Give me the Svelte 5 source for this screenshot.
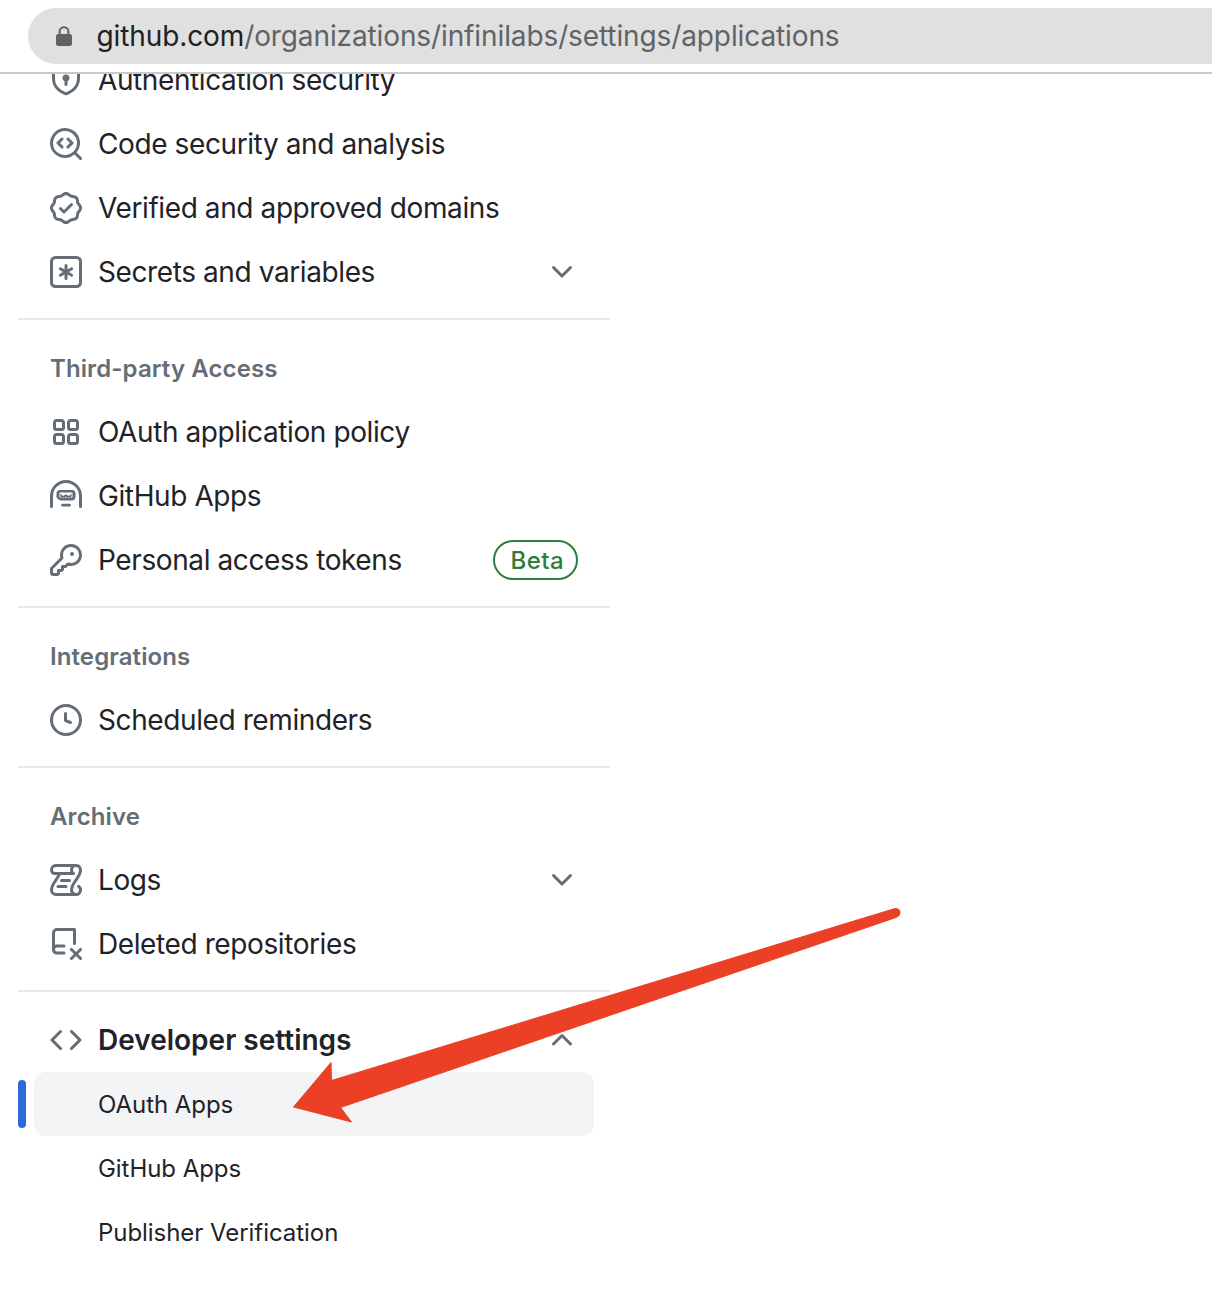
<script>
  const icons = {
    shield: 'M7.467.133a1.748 1.748 0 0 1 1.066 0l5.25 1.68A1.75 1.75 0 0 1 15 3.48V7c0 1.566-.32 3.182-1.303 4.682-.983 1.498-2.585 2.813-5.032 3.855a1.697 1.697 0 0 1-1.33 0c-2.447-1.042-4.049-2.357-5.032-3.855C1.32 10.182 1 8.566 1 7V3.48a1.75 1.75 0 0 1 1.217-1.667Zm.61 1.429a.25.25 0 0 0-.153 0l-5.25 1.68a.25.25 0 0 0-.174.238V7c0 1.358.275 2.666 1.057 3.86.784 1.194 2.121 2.34 4.366 3.297a.196.196 0 0 0 .154 0c2.245-.956 3.582-2.104 4.366-3.298C13.225 9.666 13.5 8.36 13.5 7V3.48a.251.251 0 0 0-.174-.237l-5.25-1.68ZM8.75 8.582v1.668a.75.75 0 0 1-1.5 0V8.582a1.75 1.75 0 1 1 1.5 0Z',
    codescan: 'M8.47 4.97a.75.75 0 0 0 0 1.06L9.94 7.5 8.47 8.97a.75.75 0 1 0 1.06 1.06l2-2a.75.75 0 0 0 0-1.06l-2-2a.75.75 0 0 0-1.06 0ZM6.53 6.03a.75.75 0 0 0-1.06-1.06l-2 2a.75.75 0 0 0 0 1.06l2 2a.75.75 0 1 0 1.06-1.06L5.06 7.5l1.47-1.47Z M12.246 13.307a7.501 7.501 0 1 1 1.06-1.06l2.474 2.473a.749.749 0 0 1-.326 1.275.749.749 0 0 1-.734-.215ZM1.5 7.5a6.002 6.002 0 0 0 3.608 5.504 6.002 6.002 0 0 0 6.486-1.117.748.748 0 0 1 .292-.293A6 6 0 1 0 1.5 7.5Z',
    verified: 'm9.585.52.929.68c.153.112.331.186.518.215l1.138.175a2.678 2.678 0 0 1 2.24 2.24l.174 1.139c.029.187.103.365.215.518l.68.928a2.677 2.677 0 0 1 0 3.17l-.68.928a1.174 1.174 0 0 0-.215.518l-.175 1.138a2.678 2.678 0 0 1-2.241 2.241l-1.138.175a1.17 1.17 0 0 0-.518.215l-.928.68a2.677 2.677 0 0 1-3.17 0l-.928-.68a1.174 1.174 0 0 0-.518-.215L3.83 14.41a2.678 2.678 0 0 1-2.24-2.24l-.175-1.138a1.17 1.17 0 0 0-.215-.518l-.68-.928a2.677 2.677 0 0 1 0-3.17l.68-.928c.112-.153.186-.331.215-.518l.175-1.14a2.678 2.678 0 0 1 2.24-2.24l1.139-.175c.187-.029.365-.103.518-.215l.928-.68a2.677 2.677 0 0 1 3.17 0ZM7.303 1.728l-.927.68a2.67 2.67 0 0 1-1.18.489l-1.137.174a1.179 1.179 0 0 0-.987.987l-.174 1.136a2.677 2.677 0 0 1-.489 1.18l-.68.928a1.18 1.18 0 0 0 0 1.394l.68.927c.256.348.424.753.489 1.18l.174 1.137c.078.509.478.909.987.987l1.136.174a2.67 2.67 0 0 1 1.18.489l.928.68c.414.305.979.305 1.394 0l.927-.68a2.67 2.67 0 0 1 1.18-.489l1.137-.174a1.18 1.18 0 0 0 .987-.987l.174-1.136a2.67 2.67 0 0 1 .489-1.18l.68-.928a1.176 1.176 0 0 0 0-1.394l-.68-.927a2.686 2.686 0 0 1-.489-1.18l-.174-1.137a1.179 1.179 0 0 0-.987-.987l-1.136-.174a2.677 2.677 0 0 1-1.18-.489l-.928-.68a1.176 1.176 0 0 0-1.394 0ZM11.28 6.78l-3.75 3.75a.75.75 0 0 1-1.06 0L4.72 8.78a.751.751 0 0 1 .018-1.042.751.751 0 0 1 1.042-.018L7 8.94l3.22-3.22a.751.751 0 0 1 1.042.018.751.751 0 0 1 .018 1.042Z',
    asterisk: 'M0 2.75A2.75 2.75 0 0 1 2.75 0h10.5A2.75 2.75 0 0 1 16 2.75v10.5A2.75 2.75 0 0 1 13.25 16H2.75A2.75 2.75 0 0 1 0 13.25ZM2.75 1.5c-.69 0-1.25.56-1.25 1.25v10.5c0 .69.56 1.25 1.25 1.25h10.5c.69 0 1.25-.56 1.25-1.25V2.75c0-.69-.56-1.25-1.25-1.25Z M8 4a.75.75 0 0 1 .75.75V6.7l1.69-.975a.75.75 0 0 1 .75 1.3L9.5 8l1.69.976a.75.75 0 0 1-.75 1.298L8.75 9.3v1.951a.75.75 0 0 1-1.5 0V9.299l-1.69.976a.75.75 0 0 1-.75-1.3L6.5 8l-1.69-.975a.75.75 0 0 1 .75-1.3l1.69.976V4.75A.75.75 0 0 1 8 4Z',
    apps: 'M1.5 3.25c0-.966.784-1.75 1.75-1.75h2.5c.966 0 1.75.784 1.75 1.75v2.5A1.75 1.75 0 0 1 5.75 7.5h-2.5A1.75 1.75 0 0 1 1.5 5.75Zm7 0c0-.966.784-1.75 1.75-1.75h2.5c.966 0 1.75.784 1.75 1.75v2.5a1.75 1.75 0 0 1-1.75 1.75h-2.5A1.75 1.75 0 0 1 8.5 5.75Zm-7 7c0-.966.784-1.75 1.75-1.75h2.5c.966 0 1.75.784 1.75 1.75v2.5a1.75 1.75 0 0 1-1.75 1.75h-2.5a1.75 1.75 0 0 1-1.75-1.75Zm7 0c0-.966.784-1.75 1.75-1.75h2.5c.966 0 1.75.784 1.75 1.75v2.5a1.75 1.75 0 0 1-1.75 1.75h-2.5a1.75 1.75 0 0 1-1.75-1.75ZM3.25 3a.25.25 0 0 0-.25.25v2.5c0 .138.112.25.25.25h2.5A.25.25 0 0 0 6 5.75v-2.5A.25.25 0 0 0 5.75 3Zm7 0a.25.25 0 0 0-.25.25v2.5c0 .138.112.25.25.25h2.5a.25.25 0 0 0 .25-.25v-2.5a.25.25 0 0 0-.25-.25Zm-7 7a.25.25 0 0 0-.25.25v2.5c0 .138.112.25.25.25h2.5a.25.25 0 0 0 .25-.25v-2.5a.25.25 0 0 0-.25-.25Zm7 0a.25.25 0 0 0-.25.25v2.5c0 .138.112.25.25.25h2.5a.25.25 0 0 0 .25-.25v-2.5a.25.25 0 0 0-.25-.25Z',
    hubot: 'M0 8a8 8 0 0 1 16 0v5.25a.75.75 0 0 1-1.5 0V8a6.5 6.5 0 1 0-13 0v5.25a.75.75 0 0 1-1.5 0Z M3.25 6.5C3.25 5.67 3.92 5 4.75 5h6.5c.83 0 1.5.67 1.5 1.5v2c0 .97-.78 1.75-1.75 1.75h-5.5C5.53 10.25 3.25 9.47 3.25 8.5Zm1.5-.1v1.9c0 .28.22.5.5.5h5.5c.28 0 .5-.22.5-.5V6.4a.1.1 0 0 0-.1-.1h-6.3a.1.1 0 0 0-.1.1Z M5.2 6.9 6.6 8 8 7.1 9.4 8l1.4-1.1v1.3L9.5 9.1 8 8.3l-1.5.8-1.3-.9Z M6.25 11.9h3.5a.7.7 0 0 1 0 1.4h-3.5a.7.7 0 0 1 0-1.4Z',
    key: 'M10.5 0a5.499 5.499 0 1 1-1.288 10.848l-.932.932a.749.749 0 0 1-.53.22H7v.75a.749.749 0 0 1-.22.53l-.5.5a.749.749 0 0 1-.53.22H5v.75a.749.749 0 0 1-.22.53l-.5.5a.749.749 0 0 1-.53.22h-2A1.75 1.75 0 0 1 0 14.25v-2c0-.199.079-.389.22-.53l4.932-4.932A5.5 5.5 0 0 1 10.5 0Zm-4 5.5c-.001.431.069.86.205 1.269a.75.75 0 0 1-.181.768L1.5 12.56v1.69c0 .138.112.25.25.25h1.69l.06-.06v-1.19a.75.75 0 0 1 .75-.75h1.19l.06-.06v-1.19a.75.75 0 0 1 .75-.75h1.19l1.023-1.025a.75.75 0 0 1 .768-.18A4 4 0 1 0 6.5 5.5ZM11 6a1 1 0 1 1 0-2 1 1 0 0 1 0 2Z',
    clock: 'M8 0a8 8 0 1 1 0 16A8 8 0 0 1 8 0ZM1.5 8a6.5 6.5 0 1 0 13 0 6.5 6.5 0 0 0-13 0Zm7-3.25v2.992l2.028.812a.75.75 0 0 1-.557 1.392l-2.5-1A.751.751 0 0 1 7 8.25v-3.5a.75.75 0 0 1 1.5 0Z',
    log: 'M5 8.25a.75.75 0 0 1 .75-.75h4a.75.75 0 0 1 0 1.5h-4A.75.75 0 0 1 5 8.25ZM4 10.5A.75.75 0 0 0 4 12h4a.75.75 0 0 0 0-1.5H4Z M13-.005c1.654 0 3 1.328 3 3 0 .982-.338 1.933-.783 2.818-.443.879-1.028 1.758-1.582 2.588l-.011.017c-.568.853-1.104 1.659-1.501 2.446-.398.789-.623 1.494-.623 2.136a1.5 1.5 0 1 0 2.333-1.248.75.75 0 0 1 .834-1.246A3 3 0 0 1 13 16H3a3 3 0 0 1-3-3c0-1.582.891-3.135 1.777-4.506.209-.322.418-.637.623-.946.473-.709.923-1.386 1.287-2.048H2.51c-.576 0-1.381-.133-1.907-.783A2.68 2.68 0 0 1 0 2.995a3 3 0 0 1 3-3Zm0 1.5a1.5 1.5 0 0 0-1.5 1.5c0 .476.223.834.667 1.132A.75.75 0 0 1 11.75 5.5H5.368c-.467.914-1.12 1.897-1.744 2.838l-.355.533C2.379 10.24 1.5 11.625 1.5 13A1.5 1.5 0 0 0 3 14.5h7.401A2.989 2.989 0 0 1 10 13c0-.979.338-1.928.784-2.812.441-.874 1.023-1.748 1.575-2.576l.017-.026c.568-.853 1.103-1.658 1.501-2.448.398-.79.623-1.497.623-2.143 0-.838-.669-1.5-1.5-1.5Zm-10 0a1.5 1.5 0 0 0-1.5 1.5c0 .321.1.569.27.778.097.12.325.227.74.227h7.674A2.737 2.737 0 0 1 10 2.995c0-.546.146-1.059.401-1.5Z',
    deleted: 'M1 2.5A2.5 2.5 0 0 1 3.5 0h8.75a.75.75 0 0 1 .75.75v7a.75.75 0 0 1-1.5 0V1.5h-8a1 1 0 0 0-1 1v6c.3-.13.64-.2 1-.2h3.5a.75.75 0 0 1 0 1.5H3.5a1 1 0 0 0 0 2h3.5a.75.75 0 0 1 0 1.5H3.5A2.5 2.5 0 0 1 1 10.8Z M11.28 10.22 13 11.94l1.72-1.72a.75.75 0 1 1 1.06 1.06L14.06 13l1.72 1.72a.75.75 0 1 1-1.06 1.06L13 14.06l-1.72 1.72a.75.75 0 1 1-1.06-1.06L11.94 13l-1.72-1.72a.75.75 0 1 1 1.06-1.06Z',
    code: 'm11.28 3.22 4.25 4.25a.75.75 0 0 1 0 1.06l-4.25 4.25a.749.749 0 0 1-1.275-.326.749.749 0 0 1 .215-.734L13.94 8l-3.72-3.72a.749.749 0 0 1 .326-1.275.749.749 0 0 1 .734.215Zm-6.56 0a.751.751 0 0 1 1.042.018.751.751 0 0 1 .018 1.042L2.06 8l3.72 3.72a.749.749 0 0 1-.326 1.275.749.749 0 0 1-.734-.215L.47 8.53a.75.75 0 0 1 0-1.06Z',
    down: 'M12.78 5.22a.749.749 0 0 1 0 1.06l-4.25 4.25a.749.749 0 0 1-1.06 0L3.22 6.28a.749.749 0 1 1 1.06-1.06L8 8.939l3.72-3.719a.749.749 0 0 1 1.06 0Z',
    up: 'M3.22 10.53a.749.749 0 0 1 0-1.06l4.25-4.25a.749.749 0 0 1 1.06 0l4.25 4.25a.749.749 0 1 1-1.06 1.06L8 6.811 4.28 10.53a.749.749 0 0 1-1.06 0Z'
  };

  const sections = [
    {
      items: [
        { icon: 'shield', label: 'Authentication security' },
        { icon: 'codescan', label: 'Code security and analysis' },
        { icon: 'verified', label: 'Verified and approved domains' },
        { icon: 'asterisk', label: 'Secrets and variables', chevron: 'down' }
      ]
    },
    {
      title: 'Third-party Access',
      items: [
        { icon: 'apps', label: 'OAuth application policy' },
        { icon: 'hubot', label: 'GitHub Apps' },
        { icon: 'key', label: 'Personal access tokens', badge: 'Beta' }
      ]
    },
    {
      title: 'Integrations',
      items: [{ icon: 'clock', label: 'Scheduled reminders' }]
    },
    {
      title: 'Archive',
      items: [
        { icon: 'log', label: 'Logs', chevron: 'down' },
        { icon: 'deleted', label: 'Deleted repositories' }
      ]
    }
  ];

  const devLinks = [
    { label: 'OAuth Apps', active: true },
    { label: 'GitHub Apps' },
    { label: 'Publisher Verification' }
  ];
</script>

{#snippet octicon(name)}
  <svg class="icon" viewBox="0 0 16 16" width="32" height="32" aria-hidden="true">
    <path fill="currentColor" fill-rule="evenodd" d={icons[name]} />
  </svg>
{/snippet}

<div class="page">
  <header class="browser-bar">
    <div class="address">
      <svg class="lock" viewBox="0 0 16 20" width="16" height="20" aria-hidden="true">
        <path fill="none" stroke="currentColor" stroke-width="2" d="M3.6 9V5.6a4.4 4.4 0 0 1 8.8 0V9" />
        <rect x="0" y="8" width="16" height="12" rx="2.2" fill="currentColor" />
      </svg>
      <span class="url"><span class="host">github.com</span>/organizations/infinilabs/settings/applications</span>
    </div>
  </header>

  <nav class="sidebar">
    {#each sections as section, i}
      {#if i > 0}<div class="divider"></div>{/if}
      {#if section.title}<h3 class="heading">{section.title}</h3>{/if}
      {#each section.items as item}
        <div class="row">
          {@render octicon(item.icon)}
          <span class="label">{item.label}</span>
          {#if item.badge}<span class="badge">{item.badge}</span>{/if}
          {#if item.chevron}<span class="chevron">{@render octicon(item.chevron)}</span>{/if}
        </div>
      {/each}
    {/each}

    <div class="divider"></div>
    <div class="row dev-row">
      {@render octicon('code')}
      <span class="label strong">Developer settings</span>
      <span class="chevron">{@render octicon('up')}</span>
    </div>
    {#each devLinks as link}
      <div class="row sub" class:active={link.active}>
        <span class="label small">{link.label}</span>
      </div>
    {/each}
  </nav>

  <svg class="annotation" viewBox="0 0 1212 1294" width="1212" height="1294" aria-hidden="true">
    <path
      fill="#ec4026"
      stroke="#ec4026"
      stroke-width="1"
      stroke-linejoin="round"
      d="M895 908.5 Q900.5 908.5 900 913 Q899.5 916.5 896 917.5 L340.5 1107.5 L351.5 1122 L293.5 1107 L331 1062.5 L331.5 1080.5 Z"
    />
  </svg>
</div>

<style>
  :global(body) {
    margin: 0;
    background: #fff;
  }
  .page {
    position: relative;
    width: 1212px;
    height: 1294px;
    overflow: hidden;
    font-family: Inter, "Liberation Sans", sans-serif;
    color: #1f2328;
  }
  .browser-bar {
    position: relative;
    z-index: 1;
    box-sizing: border-box;
    height: 74px;
    padding: 8px 0 0 28px;
    background: #fff;
    border-bottom: 2px solid #c9c9c9;
  }
  .address {
    display: flex;
    align-items: center;
    width: 1240px;
    height: 56px;
    border-radius: 28px;
    background: #e0e0e0;
  }
  .lock {
    margin-left: 28px;
    color: #5f6064;
  }
  .url {
    margin-left: 24.5px;
    font-size: 28px;
    letter-spacing: -0.11px;
    color: #5f6368;
  }
  .host {
    color: #202124;
  }
  .sidebar {
    margin-top: -26px;
    padding-left: 18px;
    width: 592px;
  }
  .row {
    display: flex;
    align-items: center;
    box-sizing: border-box;
    height: 64px;
    margin-left: 16px;
    width: 560px;
    padding: 0 16px;
    gap: 16px;
    color: #1f2328;
  }
  .icon {
    flex: none;
    color: #656d76;
  }
  .label {
    flex: 1;
    font-size: 28px;
    letter-spacing: -0.4px;
    white-space: nowrap;
  }
  .strong {
    font-weight: 600;
    letter-spacing: 0;
  }
  .small {
    font-size: 24px;
    letter-spacing: -0.05px;
    padding-left: 48px;
  }
  .chevron {
    display: flex;
  }
  .badge {
    box-sizing: border-box;
    height: 40px;
    padding: 0 12px 0 15px;
    display: flex;
    align-items: center;
    font-size: 24px;
    font-weight: 500;
    letter-spacing: 0.45px;
    color: #2f7d3c;
    border: 2px solid #2f7d3c;
    border-radius: 20px;
  }
  .divider {
    height: 2px;
    margin: 14px 0 0;
    background: #e5e7ea;
  }
  .heading {
    margin: 0;
    padding: 33px 0 15px 32px;
    font-size: 24px;
    line-height: 32px;
    font-weight: 600;
    letter-spacing: 0.1px;
    color: #656d76;
  }
  .dev-row {
    margin-top: 16px;
  }
  .sub {
    position: relative;
  }
  .active {
    background: #f3f4f6;
    border-radius: 12px;
  }
  .active::before {
    content: "";
    position: absolute;
    left: -16px;
    top: 8px;
    width: 8px;
    height: 48px;
    border-radius: 4px;
    background: #2d6bd8;
  }
  .annotation {
    position: absolute;
    left: 0;
    top: 0;
    z-index: 2;
    pointer-events: none;
  }
</style>
